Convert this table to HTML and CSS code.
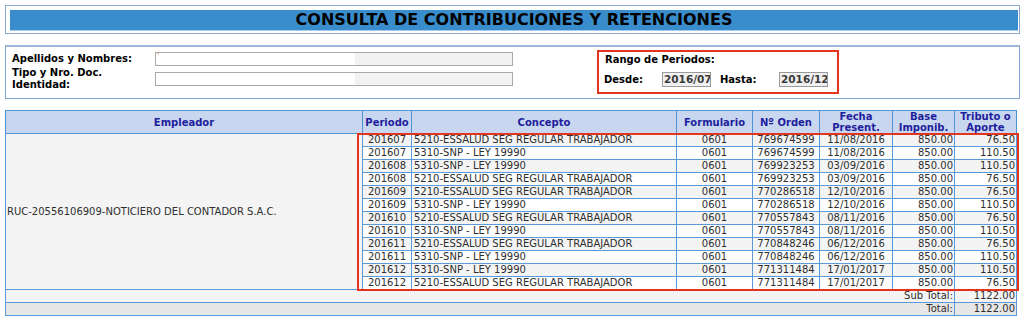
FILE: index.html
```html
<!DOCTYPE html>
<html lang="es">
<head>
<meta charset="utf-8">
<title>Consulta de Contribuciones y Retenciones</title>
<link rel="stylesheet" href="styles.css">
</head>
<body>
<div class="page">
  <div class="title-box">
    <div class="title-bar">CONSULTA DE CONTRIBUCIONES Y RETENCIONES</div>
  </div>

  <div class="form-box">
    <div class="form-grid">
      <div class="lbl">Apellidos y Nombres:</div>
      <div class="cell"><div class="field"><span class="tick">'</span></div></div>
      <div class="lbl">Tipo y Nro. Doc.<br>Identidad:</div>
      <div class="cell"><div class="field"></div></div>
    </div>
    <div class="rango">
      <div class="rango-title">Rango de Periodos:</div>
      <div class="rango-row">
        <span class="rlbl">Desde:</span>
        <span class="pfield">2016/07</span>
        <span class="rlbl">Hasta:</span>
        <span class="pfield">2016/12</span>
      </div>
    </div>
  </div>

  <div class="table-wrap">
    <table class="grid">
      <colgroup>
        <col class="w-emp"><col class="w-per"><col class="w-con"><col class="w-for">
        <col class="w-ord"><col class="w-fec"><col class="w-base"><col class="w-trib">
      </colgroup>
      <thead>
        <tr>
          <th>Empleador</th>
          <th>Periodo</th>
          <th>Concepto</th>
          <th>Formulario</th>
          <th>Nº Orden</th>
          <th>Fecha<br>Present.</th>
          <th>Base<br>Imponib.</th>
          <th>Tributo o<br>Aporte</th>
        </tr>
      </thead>
      <tbody>
        <tr class="odd"><td rowspan="12" class="emp">RUC-20556106909-NOTICIERO DEL CONTADOR S.A.C.</td><td class="c">201607</td><td class="l">5210-ESSALUD SEG REGULAR TRABAJADOR</td><td class="c">0601</td><td class="c">769674599</td><td class="c">11/08/2016</td><td class="r">850.00</td><td class="r">76.50</td></tr>
        <tr><td class="c">201607</td><td class="l">5310-SNP - LEY 19990</td><td class="c">0601</td><td class="c">769674599</td><td class="c">11/08/2016</td><td class="r">850.00</td><td class="r">110.50</td></tr>
        <tr class="odd"><td class="c">201608</td><td class="l">5310-SNP - LEY 19990</td><td class="c">0601</td><td class="c">769923253</td><td class="c">03/09/2016</td><td class="r">850.00</td><td class="r">110.50</td></tr>
        <tr><td class="c">201608</td><td class="l">5210-ESSALUD SEG REGULAR TRABAJADOR</td><td class="c">0601</td><td class="c">769923253</td><td class="c">03/09/2016</td><td class="r">850.00</td><td class="r">76.50</td></tr>
        <tr class="odd"><td class="c">201609</td><td class="l">5210-ESSALUD SEG REGULAR TRABAJADOR</td><td class="c">0601</td><td class="c">770286518</td><td class="c">12/10/2016</td><td class="r">850.00</td><td class="r">76.50</td></tr>
        <tr><td class="c">201609</td><td class="l">5310-SNP - LEY 19990</td><td class="c">0601</td><td class="c">770286518</td><td class="c">12/10/2016</td><td class="r">850.00</td><td class="r">110.50</td></tr>
        <tr class="odd"><td class="c">201610</td><td class="l">5210-ESSALUD SEG REGULAR TRABAJADOR</td><td class="c">0601</td><td class="c">770557843</td><td class="c">08/11/2016</td><td class="r">850.00</td><td class="r">76.50</td></tr>
        <tr><td class="c">201610</td><td class="l">5310-SNP - LEY 19990</td><td class="c">0601</td><td class="c">770557843</td><td class="c">08/11/2016</td><td class="r">850.00</td><td class="r">110.50</td></tr>
        <tr class="odd"><td class="c">201611</td><td class="l">5210-ESSALUD SEG REGULAR TRABAJADOR</td><td class="c">0601</td><td class="c">770848246</td><td class="c">06/12/2016</td><td class="r">850.00</td><td class="r">76.50</td></tr>
        <tr><td class="c">201611</td><td class="l">5310-SNP - LEY 19990</td><td class="c">0601</td><td class="c">770848246</td><td class="c">06/12/2016</td><td class="r">850.00</td><td class="r">110.50</td></tr>
        <tr class="odd"><td class="c">201612</td><td class="l">5310-SNP - LEY 19990</td><td class="c">0601</td><td class="c">771311484</td><td class="c">17/01/2017</td><td class="r">850.00</td><td class="r">110.50</td></tr>
        <tr><td class="c">201612</td><td class="l">5210-ESSALUD SEG REGULAR TRABAJADOR</td><td class="c">0601</td><td class="c">771311484</td><td class="c">17/01/2017</td><td class="r">850.00</td><td class="r">76.50</td></tr>
        <tr class="sub"><td colspan="7" class="r">Sub Total:</td><td class="r">1122.00</td></tr>
        <tr class="tot"><td colspan="7" class="r">Total:</td><td class="r">1122.00</td></tr>
      </tbody>
    </table>
    <div class="highlight"></div>
  </div>
</div>
</body>
</html>
```

FILE: styles.css
```css
html, body {
  margin: 0;
  padding: 0;
  background: #ffffff;
}

body {
  font-family: "DejaVu Sans", Verdana, sans-serif;
  font-size: 10px;
  color: #333333;
}

.page {
  width: 1015px;
  padding: 5px 0 0 5px;
  display: flex;
  flex-direction: column;
  gap: 11px;
}

/* Title */
.title-box {
  border: 1px solid #8ea7cb;
  padding: 4px 1px 2px 4px;
}

.title-bar {
  height: 20px;
  line-height: 20px;
  background: #3a8dcd;
  border-bottom: 1px solid #a6c8ea;
  color: #000000;
  font-weight: bold;
  font-size: 16px;
  text-align: center;
}

/* Form */
.form-box {
  border: 1px solid #7ea4d4;
  border-top: 2px solid #9fb6d8;
  padding: 3px 0 6px 6px;
  display: flex;
  align-items: flex-start;
  height: 42px;
}

.form-grid {
  display: grid;
  grid-template-columns: 143px 358px;
  grid-template-rows: 18px 22px;
  align-items: center;
}

.lbl {
  font-weight: bold;
  color: #000000;
  line-height: 12px;
}

.cell {
  display: flex;
  align-items: center;
}

.field {
  width: 356px;
  height: 12px;
  border: 1px solid #a9a9a9;
  background: linear-gradient(to right, #ffffff 199px, #f2f2f2 199px);
  position: relative;
}

.tick {
  color: #c9783a;
  font-size: 8px;
  line-height: 8px;
  padding-left: 1px;
  display: block;
}

.rango {
  margin-left: 84px;
  width: 224px;
  height: 38px;
  border: 2px solid #e5341d;
  padding: 2px 8px 0 6px;
  display: flex;
  flex-direction: column;
  gap: 6px;
}

.rango-title {
  font-weight: bold;
  color: #000000;
  line-height: 12px;
}

.rango-row {
  display: flex;
  align-items: center;
  height: 15px;
}

.rlbl {
  font-weight: bold;
  color: #000000;
  width: 58px;
  margin-left: -1px;
}

.rlbl + .pfield + .rlbl {
  margin-left: 9px;
  width: 59px;
}

.pfield {
  width: 46px;
  height: 13px;
  line-height: 13px;
  border: 1px solid #9a9a9a;
  background: #f0f0f0;
  color: #3a3a3a;
  font-weight: bold;
  font-size: 10.5px;
  padding-left: 1px;
  overflow: hidden;
  white-space: nowrap;
}

/* Table */
.table-wrap {
  position: relative;
  width: 1012px;
}

.grid {
  border-collapse: collapse;
  table-layout: fixed;
  width: 1011px;
  border: 1px solid #4d93d6;
}

.w-emp { width: 357px; }
.w-per { width: 49px; }
.w-con { width: 265px; }
.w-for { width: 76px; }
.w-ord { width: 67px; }
.w-fec { width: 73px; }
.w-base { width: 62px; }
.w-trib { width: 62px; }

.grid th {
  background: #c9d6f0;
  color: #1e1e9c;
  font-weight: bold;
  line-height: 11px;
  height: 22px;
  padding: 0;
  border: 1px solid #4d93d6;
  text-align: center;
  vertical-align: middle;
  overflow: hidden;
}

.grid td {
  line-height: 12px;
  height: 12px;
  padding: 0 2px;
  border: 1px solid #5a9ad8;
  background: #ffffff;
  white-space: nowrap;
  overflow: hidden;
  color: #2e2e2e;
}

.grid tr.odd td {
  background: #f4f4f4;
}

.grid td.emp {
  background: #f4f4f4;
  vertical-align: middle;
  text-align: left;
  padding-left: 1px;
}

.grid td.c { text-align: center; }
.grid td.l { text-align: left; }
.grid td.r { text-align: right; padding-right: 1px; }

.grid tr.sub td { background: #f4f4f4; }
.grid tr.tot td { background: #e6e6e6; }

.highlight {
  position: absolute;
  left: 352px;
  top: 23px;
  width: 658px;
  height: 154px;
  border: 2px solid #e5341d;
  pointer-events: none;
}
```
